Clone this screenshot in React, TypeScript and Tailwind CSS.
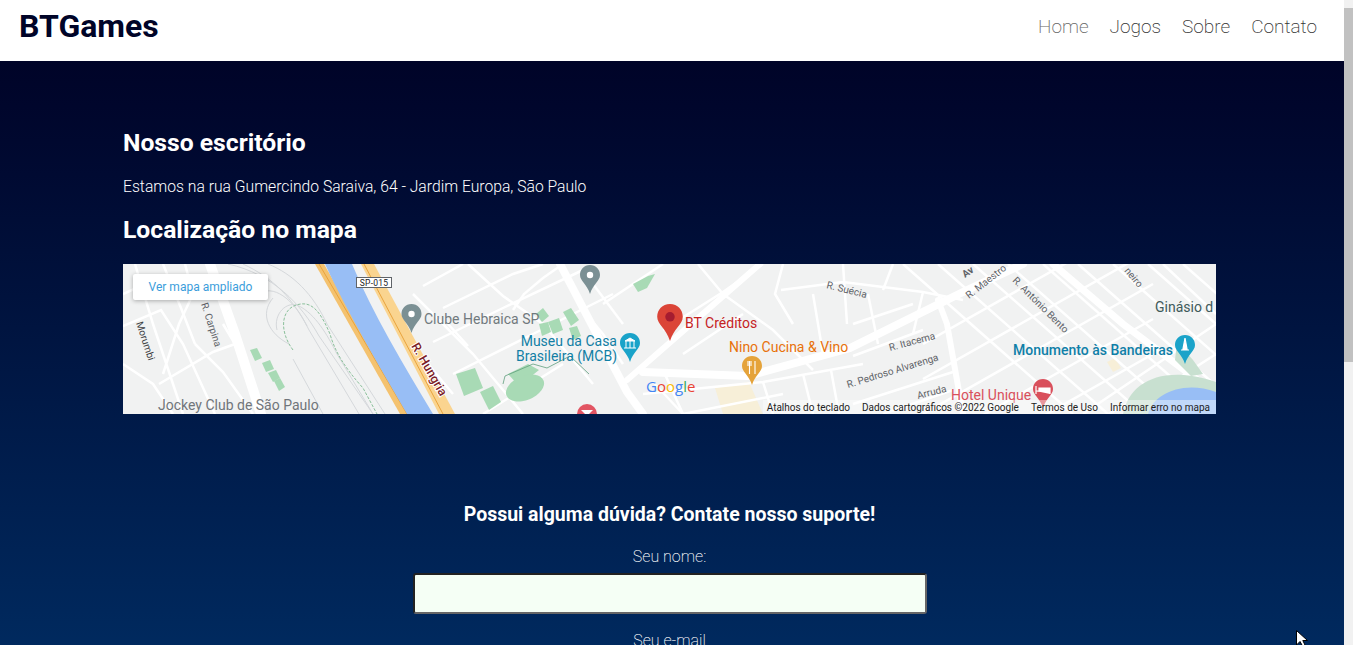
import React from 'react';

const thinRoads = [
  'M0 30 L22 20 M0 62 L38 46 L60 80 L92 150 M12 0 L30 60 L60 150 M62 0 L70 30 L56 60 L40 110',
  'M40 0 L58 44 L72 80 M72 80 L100 108 L130 150 M36 120 L90 88 L112 80 L100 60 M0 100 L30 120 L50 150',
  'M345 0 L380 32 L420 60 L470 120 M320 44 L390 10 L420 0 M310 78 L380 44 L460 6 M330 110 L410 70 L490 30',
  'M360 150 L440 100 M290 30 L350 90 L400 150 M340 0 L300 22 M325 60 L345 82 M305 100 L330 130',
  'M440 0 L420 14 L401 30 L390 46 M480 40 L540 0 M455 40 L480 70 L500 100 M470 20 L500 60 M530 118 L560 150',
  'M540 66 L600 28 L640 0 M560 90 L620 50 M600 30 L650 66 L690 106 M575 0 L600 30 M660 0 L652 30 L670 60',
  'M658 26 L720 18 L800 28 L840 36 M720 0 L724 60 M770 0 L760 26 M800 28 L790 70 M690 30 L700 90 M745 30 L755 80',
  'M520 130 L640 118 L740 100 M560 150 L660 130 M640 118 L650 150 M680 110 L690 150 M708 106 L716 150 M540 106 L560 150',
  'M730 60 L790 40 M730 92 L800 66 M730 140 L830 108 M760 150 L830 126',
];

const gridDown = [780, 815, 850, 885, 920, 955, 990, 1025, 1060];
const gridUp = [80, 115, 150, 185, 220, 255, 290, 325, 360];

type PinProps = { x: number; y: number; fill: string; scale?: number; children?: React.ReactNode };

// teardrop marker, x is the middle and y the top of the drop
const Pin = ({ x, y, fill, scale = 1, children }: PinProps) => (
  <g transform={`translate(${x} ${y}) scale(${scale})`}>
    <path d="M0 0 C6 0 10 4.5 10 10 C10 16 3 19 0 29 C-3 19 -10 16 -10 10 C-10 4.5 -6 0 0 0 Z" fill={fill} />
    {children}
  </g>
);

const MapDrawing = () => (
  <svg viewBox="0 0 1093 150" className="block w-full h-full" style={{ fontFamily: 'Roboto, sans-serif' }}>
    <rect width="1093" height="150" fill="#f1f2f2" />

    {/* yellow blocks */}
    <g fill="#f7efd8">
      <path d="M592 124 L626 118 L640 150 L600 150 Z" />
      <path d="M984 98 L992 94 L998 104 L990 108 Z" />
    </g>

    {/* thin streets */}
    <g fill="none" stroke="#fff" strokeWidth="2.5">
      {thinRoads.map((d, i) => (
        <path key={i} d={d} />
      ))}
      {gridDown.map((x, i) => (
        <path key={i} d={`M${x} 0 L${x + 170} 150`} />
      ))}
      {gridUp.map((y, i) => (
        <path key={i} d={`M800 ${y} L1030 ${y - 130}`} />
      ))}
      <path d="M960 150 L1093 60 M1000 150 L1093 90 M1040 0 L1093 50" />
    </g>

    {/* jockey track */}
    <g fill="none" stroke="#d5d8db" strokeWidth="1">
      <path d="M105 0 C150 10 178 40 196 72 L250 150" />
      <path d="M120 0 C150 14 170 34 186 66 L236 150" />
      <path d="M135 30 C150 20 170 34 184 62" />
      <path d="M154 66 C150 50 164 36 176 42 C192 50 204 70 214 90 L250 150" />
      <path d="M166 80 C146 70 136 50 150 34" />
      <path d="M170 95 L200 150" />
      <path d="M145 0 C170 10 190 30 204 60 L262 150" />
    </g>
    <path d="M170 86 C155 66 158 42 178 40 C192 38 200 54 207 70 C212 88 222 104 240 124 L254 150" fill="none" stroke="#8bc09b" strokeWidth="1" strokeDasharray="3 1.5" />

    {/* green patches */}
    <g fill="#a8dab5">
      <path d="M127 86 L134 84 L139 94 L132 97 Z" />
      <path d="M139 99 L147 96 L151 105 L143 108 Z" />
      <path d="M145 109 L153 106 L157 114 L150 118 Z" />
      <path d="M151 117 L157 114 L162 123 L156 127 Z" />
      <path d="M333 110 L352 104 L360 124 L341 132 Z" />
      <path d="M357 128 L370 122 L378 138 L366 146 Z" />
      <path d="M413 50 L420 44 L426 52 L419 58 Z" />
      <path d="M425 58 L436 54 L440 66 L430 70 Z" />
      <path d="M440 48 L448 44 L456 56 L448 62 Z" />
      <path d="M446 64 L454 62 L458 72 L450 76 Z" />
      <path d="M416 60 L425 58 L428 68 L419 72 Z" />
      <path d="M385 110 L405 100 L416 106 L396 122 Z" />
      <ellipse cx="402" cy="124" rx="20" ry="12" transform="rotate(-22 402 124)" />
      <path d="M510 20 L525 12 L532 10 L524 24 L515 28 Z" />
    </g>
    <path d="M380 120 L382 112 L410 100 L424 104 L447 92 L466 110" fill="none" stroke="#5f9e7d" strokeWidth="0.8" />

    {/* main roads */}
    <g fill="none" stroke="#fff" strokeLinecap="round">
      <path d="M87 0 L112 70 L138 150" strokeWidth="10" />
      <path d="M437 0 L504 128 L520 150" strokeWidth="8" />
      <path d="M637 0 L504 116" strokeWidth="6" />
      <path d="M520 108 L625 112 L727 84 L840 28 L900 0" strokeWidth="8" />
      <path d="M930 0 L1000 60 L1093 130" strokeWidth="7" />
      <path d="M815 36 L824 60 L840 150" strokeWidth="6" />
    </g>

    {/* river and marginal road */}
    <path d="M192 0 L201 0 L286 150 L277 150 Z" fill="#f4c26f" />
    <path d="M196 0 L284 150" stroke="#e8a33d" strokeWidth="1" fill="none" />
    <path d="M202 0 L229 0 C250 50 280 100 310 150 L284 150 C255 100 225 50 202 0 Z" fill="#98bef5" />
    <path d="M238 0 L251 0 L332 150 L316 150 Z" fill="#fad48f" />
    <path d="M241 0 L320 150" stroke="#e8a33d" strokeWidth="1" fill="none" />

    {/* lake */}
    <path d="M1000 150 C1006 118 1040 100 1093 118 L1093 150 Z" fill="#c8e0d0" />
    <path d="M1025 150 C1030 130 1060 116 1093 128 L1093 150 Z" fill="#98bef5" />
    <path d="M1054 78 L1070 96 L1080 110 L1068 112 L1052 96 Z" fill="#c8e0d0" />

    {/* pins */}
    <Pin x={467} y={1} fill="#7b9094"><circle cy="10" r="3.2" fill="#fff" /></Pin>
    <Pin x={288.5} y={40} fill="#7b9094"><circle cy="10" r="3.2" fill="#fff" /></Pin>
    <Pin x={547} y={40} fill="#db4437" scale={1.28}><circle cy="10" r="3.7" fill="#a51c30" /></Pin>
    <Pin x={507} y={69} fill="#1aa3c9">
      <path d="M-6 15 L6 15 M-5 8 L0 5 L5 8 Z M-4 8 L-4 15 M0 8 L0 15 M4 8 L4 15" stroke="#fff" strokeWidth="1" fill="#fff" />
    </Pin>
    <Pin x={629} y={92} fill="#e5a33a">
      <path d="M-4 5 L-4 10 M-2.5 5 L-2.5 18 M-1 5 L-1 10 M3 5 L3 18" stroke="#fff" strokeWidth="1.1" />
    </Pin>
    <Pin x={1062} y={71} fill="#1aa3c9">
      <path d="M0 3 L2 14 L-2 14 Z M-4 15 L4 15" stroke="#fff" strokeWidth="1.2" fill="#fff" />
    </Pin>
    <Pin x={920} y={115} fill="#d9505c">
      <path d="M-7 7 L-7 15 M-7 12 L7 12 L7 15 M-4 9 L7 9 L7 12 L-4 12 Z" stroke="#fff" strokeWidth="1.2" fill="#fff" />
    </Pin>
    <circle cx="464" cy="150" r="10" fill="#e25563" />
    <path d="M458 146 L470 146 L466 150 L462 150 Z" fill="#fff" />

    {/* highway sign */}
    <rect x="233.5" y="13.5" width="35" height="10" fill="#fff" stroke="#5f6368" />
    <text x="251" y="22" textAnchor="middle" fontSize="8.5" fill="#202124" letterSpacing="0.2">SP-015</text>

    {/* place labels */}
    <g fontSize="14">
      <text x="301" y="60" fill="#70797d">Clube Hebraica SP</text>
      <text x="35" y="146" fill="#70757a">Jockey Club de São Paulo</text>
      <text x="562" y="64" fill="#c5221f">BT Créditos</text>
      <text x="494" y="82" textAnchor="end" fill="#127fa5">Museu da Casa</text>
      <text x="494" y="97" textAnchor="end" fill="#127fa5">Brasileira (MCB)</text>
      <text x="606" y="88" fill="#e8710a">Nino Cucina &amp; Vino</text>
      <text x="890" y="91" fill="#0f7fa8" fontWeight="500">Monumento às Bandeiras</text>
      <text x="828" y="136" fill="#d9505c">Hotel Unique</text>
      <text x="1032" y="48" fill="#3f5a5a">Ginásio d</text>
    </g>

    {/* street labels */}
    <g fontSize="10" fill="#5f6368">
      <text transform="translate(703 24) rotate(14)">R. Suécia</text>
      <text transform="translate(767 87) rotate(-15)">R. Itacema</text>
      <text transform="translate(725 124) rotate(-17)">R. Pedroso Alvarenga</text>
      <text transform="translate(846 35) rotate(-38)">R. Maestro</text>
      <text transform="translate(889 17) rotate(45)">R. António Bento</text>
      <text transform="translate(78 40) rotate(72)">R. Carpina</text>
      <text transform="translate(13 59) rotate(72)" fill="#3c4043">Morumbi</text>
      <text transform="translate(795 135) rotate(-14)">Arruda</text>
      <text transform="translate(1001 7) rotate(50)">neiro</text>
      <text transform="translate(842 14) rotate(-35)" fontWeight="700">Av</text>
      <text
        transform="translate(288 82) rotate(60)"
        fontSize="12.5"
        fontWeight="500"
        fill="#7c1d26"
        stroke="#fff"
        strokeWidth="2"
        paintOrder="stroke"
      >
        R. Hungria
      </text>
    </g>

    {/* google logo */}
    <text x="523" y="128" fontSize="15" fontWeight="500" style={{ fontFamily: '"Open Sans", sans-serif' }}>
      <tspan fill="#4285f4">G</tspan>
      <tspan fill="#ea4335">o</tspan>
      <tspan fill="#fbbc05">o</tspan>
      <tspan fill="#4285f4">g</tspan>
      <tspan fill="#34a853">l</tspan>
      <tspan fill="#ea4335">e</tspan>
    </text>
  </svg>
);

const App = () => {
  return (
    <div className="relative flex h-[645px] overflow-hidden font-['Roboto',sans-serif]">
      <div className="flex-1 min-w-0">
        <header className="flex h-[61px] items-center justify-between bg-white pl-[19px] pr-[27px] pb-[8px]">
          <h1 className="mb-[2px] text-[32px] font-bold text-[#000428]">BTGames</h1>
          <nav className="mt-[2px] flex gap-[21px] text-[19px] font-extralight text-[#333]">
            <a className="text-[#666]">Home</a>
            <a>Jogos</a>
            <a>Sobre</a>
            <a>Contato</a>
          </nav>
        </header>

        <main className="h-[1089px] bg-linear-to-b from-[#000428] to-[#004e92] text-white">
          <section className="ml-[123px] w-[1093px] pt-[66px]">
            <h2 className="h-[32px] text-[24.7px] leading-[32px] font-bold">Nosso escritório</h2>
            <p className="mt-[16px] h-[24px] text-[15.7px] leading-[24px] font-light">
              Estamos na rua Gumercindo Saraiva, 64 - Jardim Europa, São Paulo
            </p>
            <h2 className="mt-[15px] h-[32px] text-[24.7px] leading-[32px] font-bold">Localização no mapa</h2>
            <div className="relative mt-[18px] h-[150px] overflow-hidden">
              <MapDrawing />
              <button className="absolute left-[10px] top-[10px] h-[26px] w-[135px] rounded-[2px] bg-white text-[12px] text-[#3b9ddb] shadow-[0_1px_4px_rgba(0,0,0,0.3)]">
                Ver mapa ampliado
              </button>
              <div className="absolute bottom-0 right-0 flex h-[14px] items-center bg-white/40 pr-[6px] pl-[4px] text-[10px] text-[#222]">
                <span className="mr-[12px]">Atalhos do teclado</span>
                <span className="mr-[12px]">Dados cartográficos ©2022 Google</span>
                <span className="mr-[12px]">Termos de Uso</span>
                <span>Informar erro no mapa</span>
              </div>
            </div>
          </section>

          <section className="mt-[87px] flex flex-col items-center pr-[5px]">
            <h3 className="h-[28px] text-[19.5px] leading-[28px] font-bold">Possui alguma dúvida? Contate nosso suporte!</h3>
            <label className="mt-[16px] h-[24px] text-[16px] leading-[24px] font-extralight">Seu nome:</label>
            <input
              type="text"
              className="mt-[4px] h-[41px] w-[514px] rounded-[3px] border-2 border-t-[#222] border-l-[#222] border-r-[#666] border-b-[#666] bg-[#f5fff5]"
            />
            <label className="mt-[15px] h-[24px] text-[16px] leading-[24px] font-extralight">Seu e-mail</label>
          </section>
        </main>
      </div>

      {/* scrollbar */}
      <div className="flex w-[9px] flex-col bg-[#f1f1f1]">
        <div className="h-[8px]" />
        <div className="h-[354px] bg-[#c1c1c1]" />
      </div>

      {/* mouse pointer */}
      <svg className="absolute left-[1296px] top-[630px]" width="12" height="16" viewBox="0 0 12 16">
        <path d="M0.5 0.5 L0.5 15 L4 11.5 L6.5 16 L9 15 L6.8 10.5 L11.5 10.5 Z" fill="#fff" stroke="#000" strokeWidth="1" />
      </svg>
    </div>
  );
};

export default App;
